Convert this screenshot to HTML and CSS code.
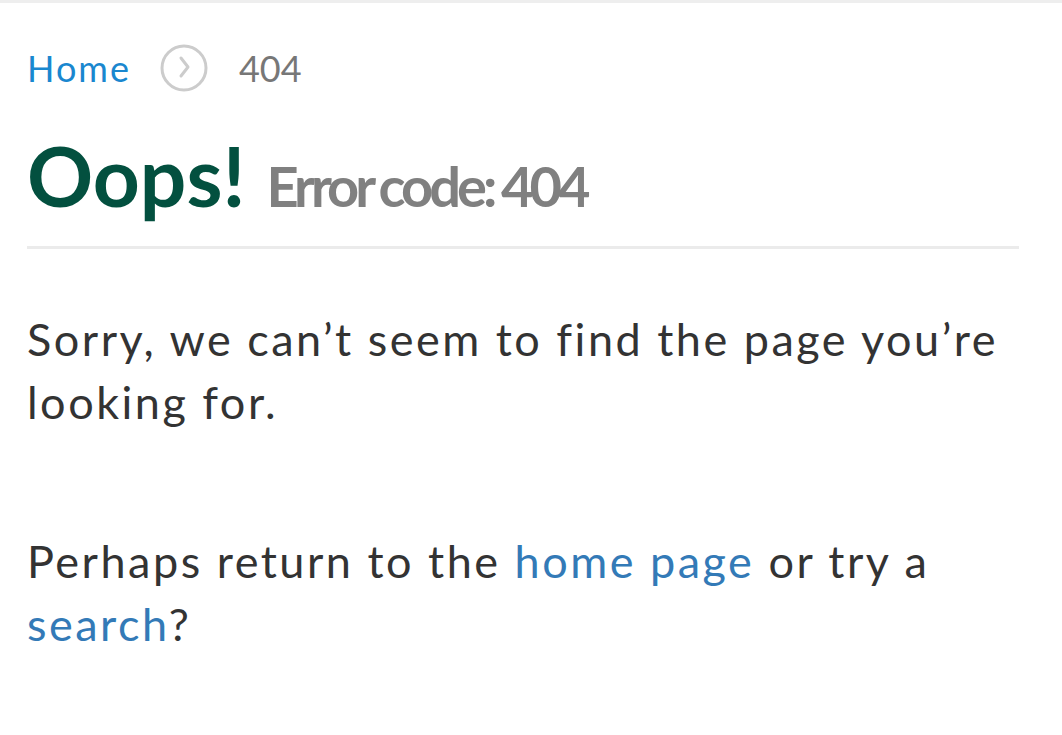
FILE: index.html
```html
<!DOCTYPE html>
<html lang="en">
<head>
<meta charset="utf-8">
<title>404 - Page not found</title>
<link rel="stylesheet" href="styles.css">
</head>
<body>
<div class="topbar"></div>
<main class="page">
  <nav class="breadcrumb">
    <a class="crumb-link" href="#">Home</a>
    <span class="crumb-sep" aria-hidden="true">
      <svg width="48" height="48" viewBox="0 0 48 48">
        <circle cx="24" cy="24" r="22" fill="none" stroke="#cccccc" stroke-width="3"/>
        <path d="M21 14 L28 23 L21 32" fill="none" stroke="#cccccc" stroke-width="3" stroke-linecap="round" stroke-linejoin="round"/>
      </svg>
    </span>
    <span class="crumb-current">404</span>
  </nav>
  <h1 class="title"><span class="oops">Oops!</span> <span class="code">Error code: 404</span></h1>
  <hr class="rule">
  <p class="text">Sorry, we can’t seem to find the page you’re looking for.</p>
  <p class="text">Perhaps return to the <a class="link" href="#">home page</a> or try a <a class="link" href="#">search</a>?</p>
</main>
</body>
</html>
```
FILE: styles.css
```css
html, body {
  margin: 0;
  padding: 0;
  background: #ffffff;
}
body {
  font-family: Lato, "Open Sans", "Liberation Sans", sans-serif;
  color: #333333;
}
.topbar {
  height: 3px;
  background: #eeeeee;
}
.page {
  padding: 0 43px 0 27px;
}
.breadcrumb {
  display: flex;
  align-items: center;
  height: 48px;
  padding-top: 41px;
  font-size: 36px;
  line-height: 48px;
}
.crumb-link {
  color: #1a87cf;
  text-decoration: none;
  letter-spacing: 2px;
}
.crumb-sep {
  display: flex;
  margin: 0 31px 0 29px;
}
.crumb-current {
  color: #777777;
}
.title {
  display: flex;
  align-items: baseline;
  gap: 21px;
  margin: 42px 0 0;
  font-weight: 700;
  white-space: nowrap;
}
.oops {
  font-size: 82px;
  line-height: 1;
  color: #03503f;
}
.code {
  font-size: 56px;
  line-height: 1;
  color: #808080;
  letter-spacing: -4px;
  word-spacing: -2px;
}
.rule {
  margin: 30px 0 0;
  border: 0;
  height: 3px;
  background: #ebebeb;
}
.text {
  margin: 59px 0 0;
  font-size: 45px;
  line-height: 63px;
  letter-spacing: 2.5px;
}
.text + .text {
  margin-top: 96px;
}
.link {
  color: #337ab7;
  text-decoration: none;
}
```
